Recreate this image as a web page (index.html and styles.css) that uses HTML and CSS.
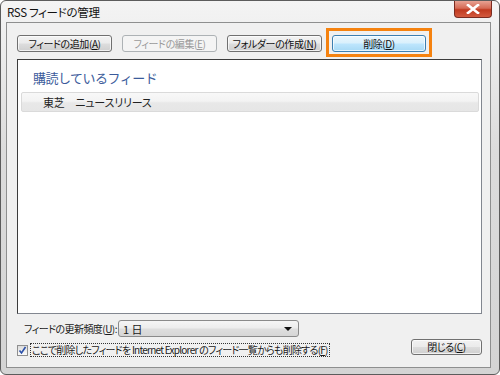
FILE: index.html
```html
<!DOCTYPE html>
<html lang="ja">
<head>
<meta charset="utf-8">
<title>RSS フィードの管理</title>
<link rel="stylesheet" href="styles.css">
</head>
<body>
<div class="window">
  <div class="titlebar">
    <span class="title">RSS フィードの管理</span>
    <span class="close">
      <svg width="14" height="10" viewBox="0 0 14 10"><path d="M2 1 L12 9 M12 1 L2 9" stroke="#fff" stroke-width="2.6" stroke-linecap="square"/></svg>
    </span>
  </div>
  <div class="client">
    <div class="toolbar">
      <button class="btn">フィードの追加(<u>A</u>)</button>
      <button class="btn disabled">フィードの編集(<u>E</u>)</button>
      <button class="btn">フォルダーの作成(<u>N</u>)</button>
      <div class="mark"><button class="btn hot">削除(<u>D</u>)</button></div>
    </div>
    <div class="listbox">
      <div class="group">購読しているフィード</div>
      <div class="item">東芝　ニュースリリース</div>
    </div>
    <div class="freq">
      <span class="label">フィードの更新頻度(<u>U</u>):</span>
      <div class="select"><span>1 日</span><span class="arrow"></span></div>
    </div>
    <div class="bottom">
      <label class="check">
        <span class="box"><svg width="9" height="9" viewBox="0 0 9 9"><path d="M1.5 4.5 L3.5 7 L7.5 1" fill="none" stroke="#2a4fa8" stroke-width="1.6"/></svg></span>
        <span class="focus">ここで削除したフィードを Internet Explorer のフィード一覧からも削除する(<u>F</u>)</span>
      </label>
      <button class="btn closebtn">閉じる(<u>C</u>)</button>
    </div>
  </div>
</div>
</body>
</html>
```

FILE: styles.css
```css
* { box-sizing: border-box; }
html, body { margin: 0; padding: 0; }
body {
  width: 500px;
  height: 375px;
  overflow: hidden;
  background: #fff;
  font-family: "Noto Sans CJK JP", "Noto Sans", sans-serif;
  font-feature-settings: "palt";
  color: #1a1a1a;
}
.window {
  width: 500px;
  height: 375px;
  border: 1px solid #5c5c5c;
  border-radius: 6px;
  background: linear-gradient(#f4f4f4, #dcdcdc 40%, #d4d4d4);
  display: flex;
  flex-direction: column;
  padding: 0 8px 6px 5px;
}
.titlebar {
  height: 21px;
  display: flex;
  align-items: flex-start;
  padding-left: 1px;
}
.title {
  font-size: 11.5px;
  line-height: 12px;
  margin-top: 5px;
  letter-spacing: -0.3px;
  color: #111;
}
.close {
  margin-left: auto;
  margin-right: -1px;
  width: 38px;
  height: 17px;
  border: 1px solid #7a2b20;
  border-top: none;
  border-radius: 0 0 4px 4px;
  background: linear-gradient(#e8a293, #d56a55 45%, #c0391f 55%, #d35a3e);
  display: flex;
  align-items: center;
  justify-content: center;
}
.close svg { display: block; }
.client {
  flex: 1;
  border: 1px solid #8e8f8f;
  background: #f0f0f0;
  display: flex;
  flex-direction: column;
  padding: 12px 8px 8px 10px;
}
.toolbar {
  display: flex;
  align-items: flex-start;
  gap: 10px;
  height: 17px;
}
.btn {
  font-family: inherit;
  font-feature-settings: "palt";
  font-size: 10px;
  letter-spacing: -0.4px;
  width: 95px;
  height: 17px;
  padding: 0;
  line-height: 14px;
  color: #111;
  white-space: nowrap;
  border: 1px solid #707070;
  border-radius: 3px;
  background: linear-gradient(#f2f2f2, #ebebeb 48%, #dddddd 52%, #cfcfcf);
  box-shadow: inset 0 0 0 1px rgba(255,255,255,0.7);
}
.btn u { text-decoration: underline; text-underline-offset: 1px; }
.btn.disabled {
  color: #9a9a9a;
  border-color: #adb2b5;
  background: #f4f4f4;
  box-shadow: none;
}
.btn.hot {
  width: 94px;
  border-color: #3c7fb1;
  background: linear-gradient(#eaf6fd, #d9f0fc 48%, #bee6fd 52%, #a7d9f5);
}
.mark {
  position: relative;
  display: flex;
  height: 17px;
}
.mark::after {
  content: "";
  position: absolute;
  left: -6px;
  right: -6px;
  top: -7px;
  bottom: -5px;
  border: 3px solid #f5820f;
  pointer-events: none;
}
.listbox {
  margin-top: 7px;
  flex: 1;
  background: #fff;
  border: 1px solid #3c3c3c;
  border-right-color: #828790;
  border-bottom-color: #828790;
  padding: 10px 2px 0 3px;
}
.group {
  font-size: 13px;
  font-feature-settings: normal;
  color: #3b5b9b;
  padding-left: 12px;
  line-height: 16px;
  letter-spacing: -0.5px;
}
.item {
  margin-top: 6px;
  height: 20px;
  border: 1px solid #dadada;
  border-radius: 2px;
  background: linear-gradient(#f8f8f8, #f3f3f3 45%, #e8e8e8 55%, #e6e6e6);
  font-size: 11px;
  letter-spacing: -0.2px;
  line-height: 18px;
  padding-left: 21px;
  color: #222;
}
.freq {
  margin-top: 6px;
  height: 17px;
  display: flex;
  align-items: center;
  padding-left: 7px;
}
.label {
  font-size: 10px;
  letter-spacing: -0.55px;
  white-space: nowrap;
  width: 94px;
}
.select {
  width: 181px;
  height: 17px;
  border: 1px solid #8a8a8a;
  border-radius: 3px;
  background: linear-gradient(#f5f5f5, #ececec 48%, #dedede 52%, #d6d6d6);
  display: flex;
  align-items: center;
  font-size: 11px;
  padding: 0 6px 0 4px;
}
.arrow {
  margin-left: auto;
  width: 0;
  height: 0;
  border-left: 4px solid transparent;
  border-right: 4px solid transparent;
  border-top: 4px solid #111;
}
.bottom {
  margin-top: 4px;
  display: flex;
  align-items: center;
  height: 18px;
}
.check {
  display: flex;
  align-items: center;
  font-size: 10px;
  letter-spacing: -0.75px;
  white-space: nowrap;
}
.box {
  width: 11px;
  height: 11px;
  border: 1px solid #8f8f8f;
  background: linear-gradient(#dcdcdc, #fbfbfb);
  display: flex;
  align-items: center;
  justify-content: center;
  margin-right: 2px;
}
.box svg { display: block; }
.focus {
  border: 1px dotted #333;
  line-height: 12px;
  padding: 0 1px;
}
.closebtn {
  margin-left: auto;
  width: 71px;
  height: 16px;
  margin-top: -6px;
}
```
